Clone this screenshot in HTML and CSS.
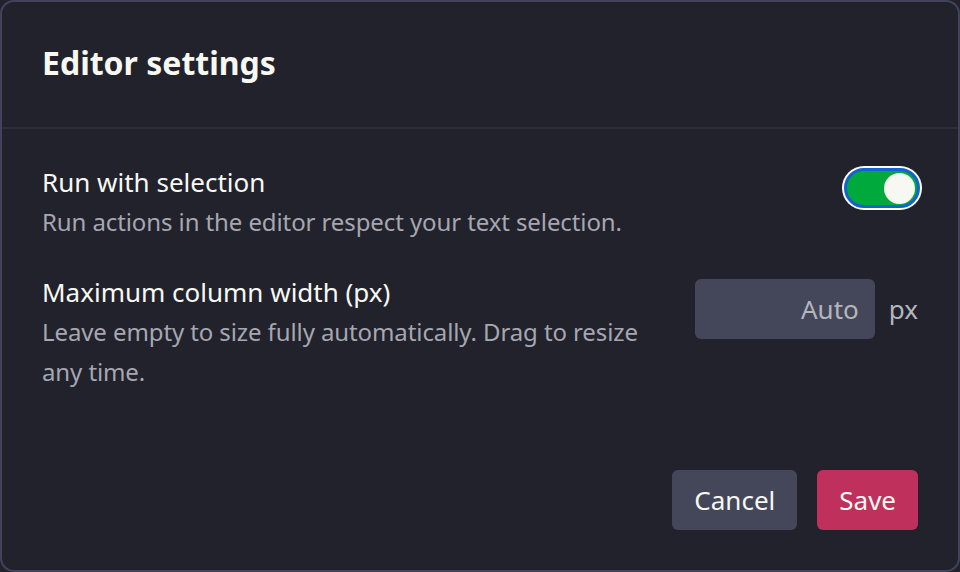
FILE: index.html
```html
<!DOCTYPE html>
<html lang="en">
<head>
<meta charset="utf-8">
<title>Editor settings</title>
<link rel="stylesheet" href="styles.css">
</head>
<body>
<div class="dialog">
  <div class="dialog-header">
    <h1 class="dialog-title">Editor settings</h1>
  </div>
  <div class="dialog-body">
    <div class="setting">
      <div class="setting-text">
        <div class="setting-label">Run with selection</div>
        <div class="setting-desc">Run actions in the editor respect your text selection.</div>
      </div>
      <div class="setting-control">
        <div class="toggle"><span class="toggle-knob"></span></div>
      </div>
    </div>
    <div class="setting setting-second">
      <div class="setting-text">
        <div class="setting-label">Maximum column width (px)</div>
        <div class="setting-desc">Leave empty to size fully automatically. Drag to resize any time.</div>
      </div>
      <div class="setting-control control-input">
        <input class="num-input" type="text" placeholder="Auto">
        <span class="unit">px</span>
      </div>
    </div>
  </div>
  <div class="dialog-footer">
    <button class="btn btn-cancel">Cancel</button>
    <button class="btn btn-save">Save</button>
  </div>
</div>
</body>
</html>
```

FILE: styles.css
```css
html, body {
  margin: 0;
  padding: 0;
  background: #21222c;
}
body {
  font-family: "Noto Sans", "Open Sans", sans-serif;
  color: #f8f8f2;
}
.dialog {
  width: 960px;
  height: 572px;
  box-sizing: border-box;
  border: 2px solid #40435a;
  border-radius: 14px;
  background: #21222c;
  display: flex;
  flex-direction: column;
}
.dialog-header {
  height: 127px;
  box-sizing: border-box;
  border-bottom: 2px solid #2d2e3b;
  display: flex;
  align-items: center;
  padding: 0 40px;
}
.dialog-title {
  margin: 0;
  font-size: 32px;
  font-weight: 700;
  line-height: 40px;
  margin-top: -4px;
}
.dialog-body {
  flex: 1;
  padding: 33px 40px 0 40px;
}
.setting {
  display: flex;
  justify-content: space-between;
  align-items: flex-start;
}
.setting-second {
  margin-top: 30px;
}
.setting-text {
  max-width: 610px;
}
.setting-label {
  font-size: 26px;
  line-height: 40px;
  color: #f8f8f2;
}
.setting-desc {
  font-size: 24px;
  line-height: 40px;
  letter-spacing: -0.1px;
  color: #a6a7b0;
}
.setting-control {
  display: flex;
  align-items: center;
}
.toggle {
  margin-top: 6px;
  margin-right: -2px;
  width: 76px;
  height: 40px;
  box-sizing: border-box;
  border-radius: 20px;
  background: #00a93c;
  border: 3px solid #1462d2;
  box-shadow: 0 0 0 2px #ffffff;
  display: flex;
  align-items: center;
  justify-content: flex-end;
  padding-right: 2px;
}
.toggle-knob {
  width: 31px;
  height: 31px;
  border-radius: 50%;
  background: #f8f8f2;
}
.control-input {
  margin-top: 7px;
  gap: 14px;
}
.num-input {
  width: 180px;
  height: 60px;
  box-sizing: border-box;
  border: none;
  border-radius: 6px;
  background: #44475a;
  padding: 0 16px;
  text-align: right;
  font-family: "Noto Sans", "Open Sans", sans-serif;
  font-size: 26px;
  color: #f8f8f2;
  outline: none;
}
.num-input::placeholder {
  color: #b4b5bd;
  opacity: 1;
}
.unit {
  font-size: 26px;
  color: #b4b5bd;
}
.dialog-footer {
  display: flex;
  justify-content: flex-end;
  gap: 20px;
  padding: 0 40px 40px 40px;
}
.btn {
  height: 60px;
  border: none;
  border-radius: 6px;
  padding: 0 22px;
  font-family: "Noto Sans", "Open Sans", sans-serif;
  font-size: 26px;
  color: #f8f8f2;
}
.btn-cancel {
  background: #44475a;
}
.btn-save {
  background: #c0305c;
}
```
